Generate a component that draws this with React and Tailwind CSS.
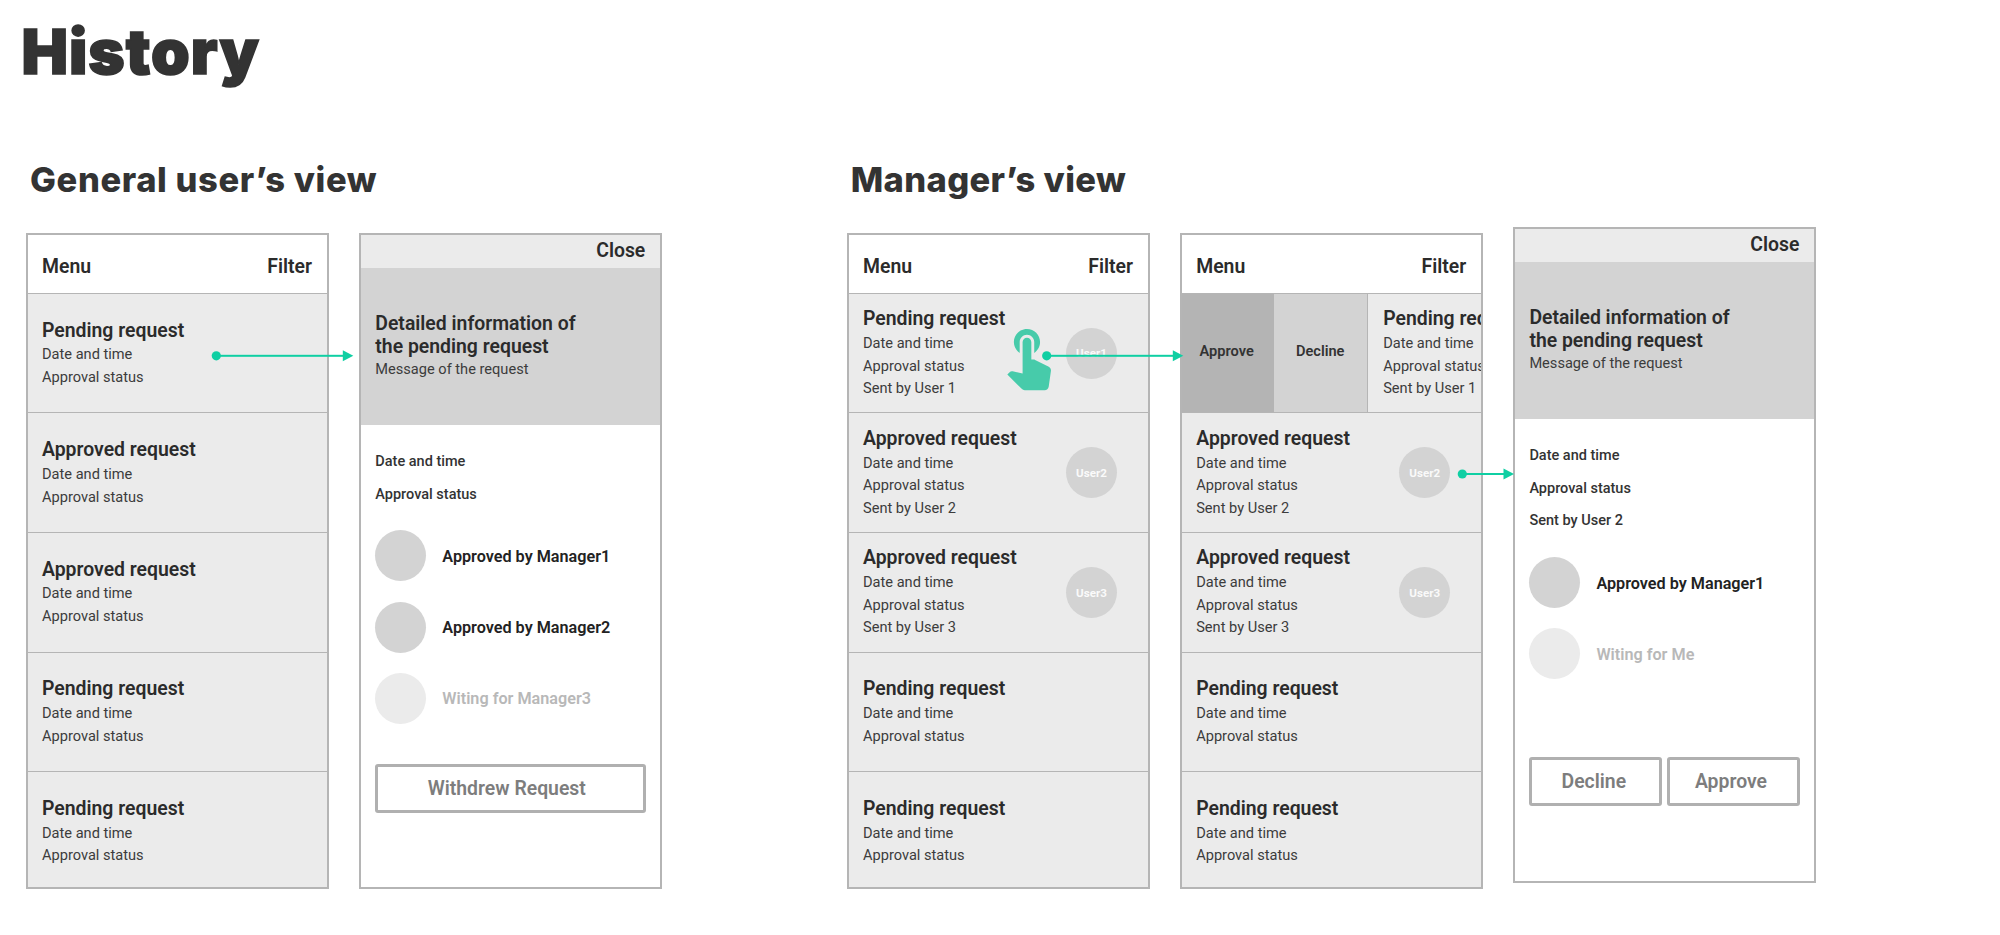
const TITLE = "text-[19.4px] leading-[22.67px] font-[650] text-[#2b2b2b]";
const BODY = "text-[14.6px] leading-[22.67px] text-[#3c3c3c]";

function Frame({ children, className = "" }) {
  return (
    <div
      className={
        "flex h-[656px] w-[303px] shrink-0 flex-col overflow-hidden border-2 border-[#b5b5b5] bg-white " +
        className
      }
    >
      {children}
    </div>
  );
}

function ListHeader() {
  return (
    <div className="flex h-[58.8px] shrink-0 items-center justify-between border-b border-[#b5b5b5] pt-[6px] pr-[15px] pl-[14px]">
      <span className={TITLE}>Menu</span>
      <span className={TITLE}>Filter</span>
    </div>
  );
}

function RequestText({ title, user }) {
  return (
    <div className="pt-[2px] whitespace-nowrap">
      <h3 className={TITLE + " pb-px"}>{title}</h3>
      <p className={BODY}>Date and time</p>
      <p className={BODY}>Approval status</p>
      {user && <p className={BODY}>Sent by User {user}</p>}
    </div>
  );
}

function RequestRow({ title, user }) {
  return (
    <div className="flex h-[119.6px] shrink-0 items-center justify-between border-b border-[#b5b5b5] bg-[#ebebeb] pr-[31px] pl-[14px]">
      <RequestText title={title} user={user} />
      {user && (
        <div className="flex size-[51px] items-center justify-center rounded-full bg-[#d3d3d3] pt-[2px] text-[11.6px] font-bold text-[#fafafa]">
          User{user}
        </div>
      )}
    </div>
  );
}

function SwipedRow() {
  return (
    <div className="flex h-[119.6px] shrink-0 overflow-hidden border-b border-[#b5b5b5] bg-[#ebebeb] text-[14.6px] font-semibold text-[#333]">
      <div className="flex w-[92px] shrink-0 items-center justify-center bg-[#b4b4b4] pr-[3px] pb-[2px]">
        Approve
      </div>
      <div className="flex w-[94px] shrink-0 items-center justify-center border-r border-[#b5b5b5] bg-[#d3d3d3] pr-px pb-[2px]">
        Decline
      </div>
      <div className="flex items-center pl-[15px] font-normal">
        <RequestText title="Pending request" user="1" />
      </div>
    </div>
  );
}

function DetailTop({ meta }) {
  return (
    <>
      <div className="flex h-[33px] shrink-0 items-center justify-end bg-[#ebebeb] pr-[15px] pl-[14px]">
        <span className={TITLE}>Close</span>
      </div>
      <div className="flex h-[157px] shrink-0 flex-col justify-center bg-[#d3d3d3] px-[14px] pt-px">
        <h3 className={TITLE}>
          Detailed information of
          <br />
          the pending request
        </h3>
        <p className={BODY}>Message of the request</p>
      </div>
      <div className="mt-[21.4px] px-[14px] text-[14.5px] leading-[32.3px] font-medium text-[#333]">
        {meta.map((m) => (
          <p key={m}>{m}</p>
        ))}
      </div>
    </>
  );
}

function Approver({ label, waiting }) {
  return (
    <div className="flex items-center gap-4">
      <div className={"size-[51px] rounded-full " + (waiting ? "bg-[#ebebeb]" : "bg-[#d3d3d3]")} />
      <span
        className={
          "pt-[2px] text-[16.2px] leading-5 font-semibold " + (waiting ? "text-[#b8b8b8]" : "text-[#222]")
        }
      >
        {label}
      </span>
    </div>
  );
}

function Button({ children, className = "" }) {
  return (
    <button
      className={
        "h-[49px] flex-1 rounded-[3px] border-3 border-[#b0b0b0] text-[19.4px] font-semibold text-[#7d7d7d] " +
        className
      }
    >
      {children}
    </button>
  );
}

function Flow({ x, y, end }) {
  return (
    <g fill="#0fcfa3" stroke="none">
      <circle cx={x} cy={y} r="4.6" />
      <rect x={x} y={y - 1} width={end - 8 - x} height="2" />
      <path d={`M${end - 10.5} ${y - 5.5}L${end} ${y}L${end - 10.5} ${y + 5.5}Z`} />
    </g>
  );
}

export default function App() {
  return (
    <main className="relative h-[935px] w-[2000px] overflow-hidden bg-white pt-[21px] font-['Roboto',sans-serif]">
      <h1 className="ml-[21.5px] font-['Inter',sans-serif] text-[62px] leading-[62px] font-black tracking-[1px] text-[#333] [-webkit-text-stroke:1.6px_#333]">
        History
      </h1>

      <div className="mt-[77px] flex pl-[26px]">
        <section className="w-[821px] shrink-0">
          <h2 className="ml-1 font-['Inter',sans-serif] text-[34.5px] leading-10 font-extrabold tracking-[0.6px] text-[#333]">
            General user’s view
          </h2>
          <div className="mt-[33px] flex gap-[30.3px]">
            <Frame>
              <ListHeader />
              <RequestRow title="Pending request" />
              <RequestRow title="Approved request" />
              <RequestRow title="Approved request" />
              <RequestRow title="Pending request" />
              <RequestRow title="Pending request" />
            </Frame>
            <Frame>
              <DetailTop meta={["Date and time", "Approval status"]} />
              <div className="mt-[19.4px] flex flex-col gap-[20.2px] px-[14px]">
                <Approver label="Approved by Manager1" />
                <Approver label="Approved by Manager2" />
                <Approver label="Witing for Manager3" waiting />
              </div>
              <div className="mt-[40px] flex px-[14px]">
                <Button className="pr-[8px]">Withdrew Request</Button>
              </div>
            </Frame>
          </div>
        </section>

        <section className="shrink-0">
          <h2 className="ml-[3.7px] font-['Inter',sans-serif] text-[34.5px] leading-10 font-extrabold tracking-[0.35px] text-[#333]">
            Manager’s view
          </h2>
          <div className="mt-[33px] flex gap-[30.2px]">
            <Frame>
              <ListHeader />
              <RequestRow title="Pending request" user="1" />
              <RequestRow title="Approved request" user="2" />
              <RequestRow title="Approved request" user="3" />
              <RequestRow title="Pending request" />
              <RequestRow title="Pending request" />
            </Frame>
            <Frame>
              <ListHeader />
              <SwipedRow />
              <RequestRow title="Approved request" user="2" />
              <RequestRow title="Approved request" user="3" />
              <RequestRow title="Pending request" />
              <RequestRow title="Pending request" />
            </Frame>
            <Frame className="-mt-[6px]">
              <DetailTop meta={["Date and time", "Approval status", "Sent by User 2"]} />
              <div className="mt-[20px] flex flex-col gap-[20.2px] px-[14px]">
                <Approver label="Approved by Manager1" />
                <Approver label="Witing for Me" waiting />
              </div>
              <div className="mt-[78px] flex gap-[4.3px] px-[14px]">
                <Button className="pr-[4px]">Decline</Button>
                <Button className="pr-[5px]">Approve</Button>
              </div>
            </Frame>
          </div>
        </section>
      </div>

      <svg className="pointer-events-none absolute inset-0" width="2000" height="935" viewBox="0 0 2000 935">
        <path
          transform="translate(993.5 320.3) scale(2.91)"
          fill="#47cbaa"
          d="M9 11.24V7.5C9 6.12 10.12 5 11.5 5S14 6.12 14 7.5v3.74c1.21-.81 2-2.18 2-3.74C16 5.01 13.99 3 11.5 3S7 5.01 7 7.5c0 1.56.79 2.93 2 3.74zm9.84 4.63l-4.54-2.26c-.17-.07-.35-.11-.54-.11H13v-6c0-.83-.67-1.5-1.5-1.5S10 6.67 10 7.5v10.74l-3.43-.72c-.08-.01-.15-.03-.24-.03-.31 0-.59.13-.79.33l-.79.8 4.94 4.94c.27.27.65.44 1.06.44h6.79c.75 0 1.33-.55 1.44-1.28l.75-5.27c.01-.07.02-.14.02-.2 0-.62-.38-1.16-.91-1.38z"
        />
        <Flow x={216.3} y={355.8} end={353.3} />
        <Flow x={1046.7} y={355.8} end={1183.3} />
        <Flow x={1462.3} y={474} end={1514} />
      </svg>
    </main>
  );
}
